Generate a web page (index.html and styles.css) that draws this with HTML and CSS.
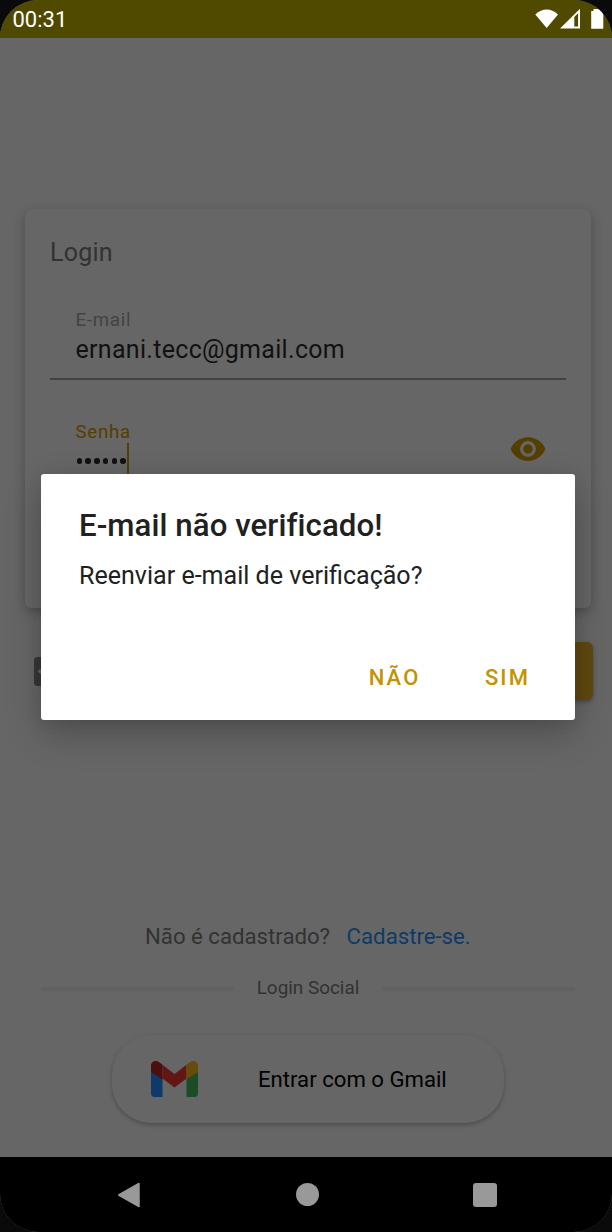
FILE: index.html
```html
<!DOCTYPE html>
<html lang="pt-BR">
<head>
<meta charset="utf-8">
<title>Login</title>
<link rel="stylesheet" href="styles.css">
</head>
<body>
<div class="phone">
  <header class="status">
    <span class="clock">00:31</span>
    <svg class="status-icons" width="72" height="24" viewBox="0 0 72 24">
      <path d="M.3 6.5C7.500-.2 15.800-.2 23 6.500L11.700 20Z" fill="#fff"/>
      <path fill-rule="evenodd" d="M25 20.500L45 .8V20.500ZM39.300 9v9.600h3.800V5.300Z" fill="#fff"/>
      <path d="M58.500 1h6.500v2h3.300v17.700H56.200V3h2.300Z" fill="#fff"/>
    </svg>
  </header>
  <main class="screen">
    <section class="card">
      <h1 class="card-title">Login</h1>
      <div class="field">
        <span class="label">E-mail</span>
        <span class="value">ernani.tecc@gmail.com</span>
      </div>
      <div class="field password">
        <div class="entry">
          <span class="label active">Senha</span>
          <span class="secret"><i></i><i></i><i></i><i></i><i></i><i></i><b class="caret"></b></span>
        </div>
        <svg class="eye" width="38" height="38" viewBox="0 0 24 24"><path fill="#543e00" d="M12 4.500C7 4.500 2.730 7.610 1 12c1.730 4.390 6 7.500 11 7.500s9.270-3.110 11-7.500c-1.730-4.390-6-7.500-11-7.500zM12 17a5 5 0 1 1 0-10 5 5 0 0 1 0 10zm0-8a3 3 0 1 0 0 6 3 3 0 0 0 0-6z"/></svg>
      </div>
    </section>
    <div class="actions">
      <svg class="bio" width="38" height="29" viewBox="0 0 38 29"><rect width="38" height="29" rx="3.500" fill="#373737"/><path d="M3.500 14.500l2.500-2.500 4 4-1.500 2Z" fill="#666"/></svg>
      <div class="submit"></div>
    </div>
    <p class="signup"><span>Não é cadastrado?</span><a class="link">Cadastre-se.</a></p>
    <div class="divider"><span class="rule"></span><span class="divider-text">Login Social</span><span class="rule"></span></div>
    <div class="gmail">
      <svg class="logo" width="47" height="36" viewBox="0 0 47 36">
        <path d="M0 9l11.500 8.500V36H3.500Q0 36 0 32Z" fill="#0d3a68"/>
        <path d="M47 9l-11.500 8.500V36h8Q47 36 47 32Z" fill="#1c4c25"/>
        <path d="M11.500 3.700L23.500 13 35.500 3.700V17.500L23.500 26.500 11.500 17.500Z" fill="#631715"/>
        <path d="M0 11V5C0 0 5.500-1.500 9 1.800L11.500 3.700V18.500Z" fill="#4d0f0d"/>
        <path d="M47 11V5C47 0 41.500-1.500 38 1.800L35.500 3.700V18.500Z" fill="#664b0c"/>
      </svg>
      <span class="gmail-text">Entrar com o Gmail</span>
    </div>
  </main>
  <nav class="nav">
    <svg width="24" height="26" viewBox="0 0 24 26"><path d="M1.700 13L22 1.500V24.500Z" fill="#999" stroke="#999" stroke-width="1.500" stroke-linejoin="round"/></svg>
    <span class="home"></span>
    <span class="recent"></span>
  </nav>
  <div class="dialog" role="dialog">
    <h2 class="dialog-title">E-mail não verificado!</h2>
    <p class="dialog-text">Reenviar e-mail de verificação?</p>
    <div class="dialog-actions"><span>NÃO</span><span>SIM</span></div>
  </div>
</div>
</body>
</html>
```
FILE: styles.css
```css
* { box-sizing: border-box; }
body { margin: 0; background: #0a0a0a; font-family: Roboto, sans-serif; }
h1, h2, p { margin: 0; font-weight: 400; }
.phone { position: relative; width: 612px; height: 1232px; display: flex; flex-direction: column; border-radius: 38px; overflow: hidden; background: #666; }
.status { height: 38px; flex: none; background: #504900; display: flex; justify-content: space-between; padding: 8px 6px 0 12.500px; }
.clock { color: #fff; font-size: 22px; line-height: 24px; }
.status-icons { margin-right: -1px; }
.screen { height: 1119px; flex: none; padding-top: 171px; }
.card { width: 566px; height: 399px; margin-left: 25px; padding: 28px 25px 0; border-radius: 6px; background: #666; box-shadow: 0 4px 12px rgba(0,0,0,.26); }
.card-title { font-size: 25px; line-height: 32px; letter-spacing: .250px; color: #323232; }
.field { display: flex; flex-direction: column; height: 111px; padding: 40px 25px 0; border-bottom: 2px solid #414141; }
.label { font-size: 18.700px; line-height: 22px; letter-spacing: .700px; color: #434343; padding-left: .5px; }
.value { font-size: 25px; line-height: 30px; margin-top: 4px; letter-spacing: .300px; color: #111; padding-left: .5px; }
.active { color: #543e00; }
.password { flex-direction: row; justify-content: space-between; border: 0; padding: 41px 19px 0 25px; }
.entry { display: flex; flex-direction: column; }
.secret { display: flex; align-items: center; gap: 3.300px; height: 36px; padding-left: 1.500px; }
.secret i { width: 5.500px; height: 5.500px; border-radius: 50%; background: #111; }
.caret { width: 2px; height: 36px; margin-left: -2px; background: #543e00; }
.eye { margin-top: 9px; }
.actions { display: flex; align-items: center; justify-content: space-between; margin-top: 34px; padding: 0 19px 0 34px; height: 58px; }
.submit { width: 180px; height: 58px; border-radius: 6px; background: #604910; box-shadow: 0 2px 4px rgba(0,0,0,.3); }
.signup { display: flex; gap: 16.500px; margin: 220px 0 0 145px; height: 32px; font-size: 22.200px; line-height: 32px; color: #323232; }
.link { color: #0d3a66; }
.divider { display: flex; align-items: center; justify-content: space-between; height: 24px; margin: 25px 37px 0 41px; }
.rule { width: 193px; height: 4px; background: #616161; }
.divider-text { font-size: 18.900px; line-height: 22px; padding-bottom: 2px; color: #323232; }
.gmail { display: flex; align-items: center; width: 392px; height: 88px; margin: 34px 0 0 112px; padding-left: 39px; border-radius: 39px; background: #666; box-shadow: 0 2px 4px rgba(0,0,0,.25); }
.gmail-text { margin-left: 60px; font-size: 22.150px; color: #000; }
.nav { flex: none; height: 75px; background: #000; display: flex; align-items: center; padding-left: 117px; }
.home { width: 23px; height: 23px; border-radius: 50%; background: #999; margin-left: 155px; }
.recent { width: 24px; height: 24px; border-radius: 3px; background: #999; margin-left: 154px; }
.dialog { position: absolute; left: 41px; top: 474px; width: 534px; height: 246px; padding: 34px 38px 0; border-radius: 3px; background: #fff; box-shadow: 0 14px 36px rgba(0,0,0,.23), 0 2px 16px rgba(0,0,0,.08); color: #212121; }
.dialog-title { font-size: 31.200px; line-height: 36px; font-weight: 500; letter-spacing: .070px; }
.dialog-text { font-size: 25.050px; line-height: 30px; margin-top: 17px; }
.dialog-actions { display: flex; justify-content: flex-end; gap: 64.500px; margin-top: 72px; padding-right: 7px; font-size: 22px; line-height: 30px; font-weight: 500; letter-spacing: 2.100px; color: #c69200; }
```
